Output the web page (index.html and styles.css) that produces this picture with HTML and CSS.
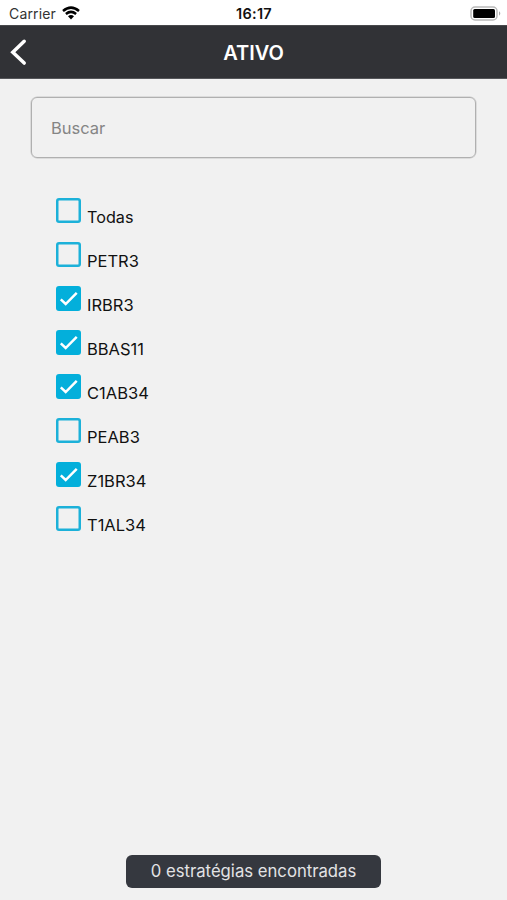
FILE: index.html
```html
<!DOCTYPE html>
<html lang="pt-BR">
<head>
<meta charset="utf-8">
<meta name="viewport" content="width=device-width, initial-scale=1">
<title>Ativo</title>
<link rel="stylesheet" href="styles.css">
</head>
<body>
<div class="screen">
  <div class="status">
    <div class="carrier">
      <span class="network">Carrier</span>
      <svg class="wifi" viewBox="0 0 18 14" width="18" height="14">
        <path d="M1 5Q9-1.8 17 5M3.9 8Q9 3.8 14.1 8" fill="none" stroke="#000" stroke-width="2.5"/>
        <path d="M6 10.2Q9 7.8 12 10.2L9 13.4Z"/>
      </svg>
    </div>
    <span class="clock">16:17</span>
    <svg class="battery" viewBox="0 0 32 16" width="32" height="16">
      <rect x="1" y="1" width="26" height="13" rx="4" fill="#fff" stroke="#b9b9b9" stroke-width="1.5"/>
      <rect x="3.2" y="3" width="21.8" height="9" rx="1.5"/>
      <path d="M29 5.3q2.6 2.2 0 4.4z" fill="#aaa"/>
    </svg>
  </div>
  <header class="navbar">
    <button class="back" aria-label="Voltar">
      <svg viewBox="0 0 18 28" width="18" height="28"><path d="M14.2 3.3 2.8 14.2 14.2 25.1" fill="none" stroke="#fff" stroke-width="3.5" stroke-linecap="round"/></svg>
    </button>
    <h1 class="title">ATIVO</h1>
    <span></span>
  </header>
  <main class="content">
    <input class="search" type="text" placeholder="Buscar" aria-label="Buscar">
    <ul class="list">
      <li class="item"><span class="box"></span><span class="name word">Todas</span></li>
      <li class="item"><span class="box"></span><span class="name">PETR3</span></li>
      <li class="item"><span class="box on"><svg viewBox="0 0 24 24"><path d="M4.6 12.8 9.3 17.3 19.9 6.5"/></svg></span><span class="name">IRBR3</span></li>
      <li class="item"><span class="box on"><svg viewBox="0 0 24 24"><path d="M4.6 12.8 9.3 17.3 19.9 6.5"/></svg></span><span class="name">BBAS11</span></li>
      <li class="item"><span class="box on"><svg viewBox="0 0 24 24"><path d="M4.6 12.8 9.3 17.3 19.9 6.5"/></svg></span><span class="name">C1AB34</span></li>
      <li class="item"><span class="box"></span><span class="name">PEAB3</span></li>
      <li class="item"><span class="box on"><svg viewBox="0 0 24 24"><path d="M4.6 12.8 9.3 17.3 19.9 6.5"/></svg></span><span class="name">Z1BR34</span></li>
      <li class="item"><span class="box"></span><span class="name">T1AL34</span></li>
    </ul>
  </main>
  <footer class="footer"><div class="result">0 estratégias encontradas</div></footer>
</div>
</body>
</html>
```
FILE: styles.css
```css
* { box-sizing: border-box; }

body {
  margin: 0;
  background: #f1f1f1;
  color: #111;
  font-family: Inter, "Liberation Sans", sans-serif;
}

.screen {
  display: flex;
  flex-direction: column;
  height: 900px;
}

.status {
  display: grid;
  grid-template-columns: 1fr auto 1fr;
  align-items: center;
  height: 25px;
  padding: 2px 5px 0 9px;
  background: #fff;
  font-size: 14px;
}

.carrier {
  display: flex;
  align-items: center;
  gap: 6px;
  color: #333;
}

.network { letter-spacing: 0.15px; }

.wifi { margin-top: -2px; }

.clock {
  margin-left: -3px;
  font-size: 14.5px;
  font-weight: 600;
  letter-spacing: 0.3px;
}

.battery { justify-self: end; }

.navbar {
  display: grid;
  grid-template-columns: 1fr auto 1fr;
  align-items: center;
  height: 54px;
  padding: 0 10px;
  background: #313236;
  border-top: 1px solid #48494c;
  border-bottom: 1px solid #55565a;
  color: #fff;
}

.back {
  display: flex;
  width: 18px;
  padding: 0;
  border: 0;
  background: none;
}

.title {
  margin: 1px 0 0;
  font-size: 20px;
  font-weight: 600;
  line-height: 24px;
}

.content {
  flex: 1;
  padding: 18px 31px 0;
}

.search {
  display: block;
  width: 445px;
  height: 61px;
  padding: 0 19px;
  border: 1px solid #b0b0b0;
  border-radius: 6px;
  box-shadow: 0 0 0 0.5px #c8c8c8;
  background: transparent;
  font: 16.5px Inter, "Liberation Sans", sans-serif;
}

.search::placeholder { color: #858585; opacity: 1; }

.list {
  margin: 40px 0 0;
  padding: 0 0 0 25px;
  list-style: none;
}

.item {
  display: flex;
  gap: 6px;
  height: 44px;
}

.box {
  width: 25px;
  height: 25px;
  border-radius: 3px;
  box-shadow: inset 0 0 0 2.5px #1cb1d9;
}

.on {
  background: #03afdb;
  box-shadow: none;
}

.box svg {
  display: block;
  width: 25px;
  height: 25px;
  fill: none;
  stroke: #fff;
  stroke-width: 2.4;
}

.name {
  padding-top: 9px;
  font-size: 16.5px;
  line-height: 20px;
}

.word { font-size: 16.2px; }

.footer {
  display: flex;
  justify-content: center;
  padding-bottom: 12px;
}

.result {
  width: 255px;
  height: 33px;
  border-radius: 6px;
  background: #35383f;
  color: #e3e3e5;
  font-size: 16.7px;
  line-height: 33px;
  text-align: center;
}
```
